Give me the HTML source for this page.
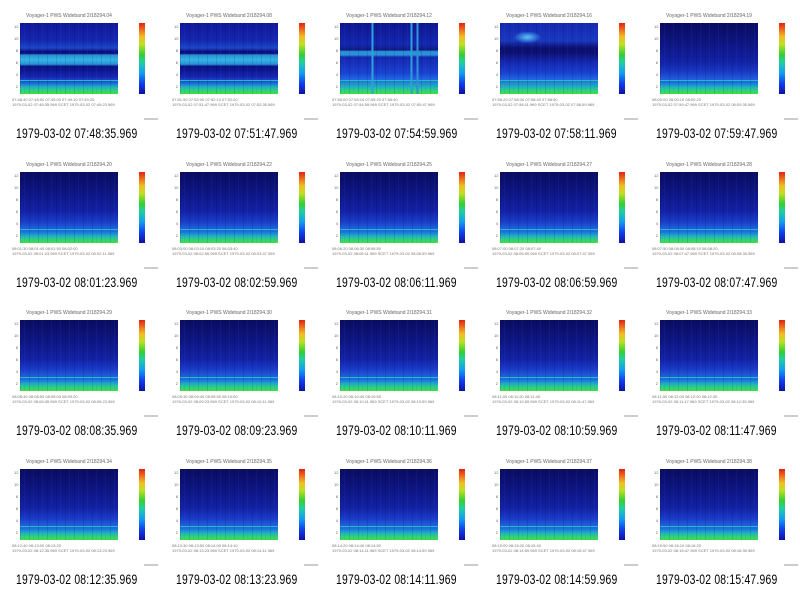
<!DOCTYPE html>
<html><head><meta charset="utf-8">
<style>
*{margin:0;padding:0;box-sizing:border-box}
body{width:800px;height:596px;background:#fff;position:relative;overflow:hidden;font-family:"Liberation Sans",sans-serif}
.c{position:absolute;width:160px;height:148px}
.t{position:absolute;left:20px;top:13px;width:98px;text-align:center;font-size:5px;line-height:6px;color:#666;white-space:nowrap}
.p{position:absolute;left:20px;top:23px;width:98px;height:71px;
background:
repeating-linear-gradient(to right,rgba(0,0,40,.12) 0 1px,transparent 1px 4px,rgba(60,90,230,.1) 4px 5px,transparent 5px 9px),
linear-gradient(to bottom,transparent 0,transparent 80%,#2bb8c8 80%,#2bb8c8 82%,transparent 82%),
linear-gradient(to bottom,#0a0c60 0%,#0e1684 30%,#1222a4 55%,#1a3cc8 70%,#1e5ad8 78%,#1870e0 84%,#20b0c0 90%,#30d080 95%,#40e040 100%)}
.p1{background:
repeating-linear-gradient(to right,rgba(0,0,40,.12) 0 1px,transparent 1px 4px,rgba(60,90,230,.1) 4px 5px,transparent 5px 9px),
linear-gradient(to bottom,transparent 0,transparent 80%,#2bb8c8 80%,#2bb8c8 82%,transparent 82%),
linear-gradient(to bottom,#10189a 0%,#1428b0 25%,#1a48c8 35%,#0c1080 40%,#0c1080 43%,#2a90d8 45%,#30b8e0 52%,#2a90d8 58%,#0c1080 61%,#0e1690 66%,#1428b0 76%,#1a60d8 84%,#20b0c0 90%,#30d080 95%,#40e040 100%)}
.p3{background:
linear-gradient(to right,transparent 32%,#30a0d8 32%,#30a0d8 34%,transparent 34%,transparent 72%,#30a0d8 72%,#30a0d8 74%,transparent 74%,transparent 78%,#3090d8 78%,#3090d8 80%,transparent 80%),
repeating-linear-gradient(to right,rgba(0,0,40,.12) 0 1px,transparent 1px 4px,rgba(60,90,230,.1) 4px 5px,transparent 5px 9px),
linear-gradient(to bottom,transparent 0,transparent 80%,#2bb8c8 80%,#2bb8c8 82%,transparent 82%),
linear-gradient(to bottom,#0e1690 0%,#1428b0 30%,#101a80 38%,#2a90d8 40%,#2a90d8 45%,#1428b0 48%,#1a40d0 70%,#1e60e0 78%,#20b0c0 90%,#30d080 95%,#40e040 100%)}
.p4{background:
radial-gradient(ellipse 14px 6px at 28% 20%,#60c8f0 0%,#3070d8 60%,transparent 100%),
repeating-linear-gradient(to right,rgba(0,0,40,.12) 0 1px,transparent 1px 4px,rgba(60,90,230,.1) 4px 5px,transparent 5px 9px),
linear-gradient(to bottom,transparent 0,transparent 80%,#2bb8c8 80%,#2bb8c8 82%,transparent 82%),
linear-gradient(to bottom,#1428b0 0%,#1a38c0 25%,#0c1070 35%,#0c1070 42%,#1428b0 55%,#1a40d0 70%,#1e60e0 78%,#20b0c0 90%,#30d080 95%,#40e040 100%)}
.b{position:absolute;left:139px;top:23px;width:6px;height:71px;
background:linear-gradient(to top,#1010a0 0%,#1040f0 15%,#10a0f0 30%,#20d0a0 45%,#30d030 55%,#c0e020 70%,#f0c020 80%,#f08020 88%,#e02010 100%)}
.ya{position:absolute;left:14px;top:21px;font-size:4px;line-height:12px;color:#666;text-align:right;width:4px}
.xl{position:absolute;left:12px;top:97px;width:120px;font-size:4px;color:#777;white-space:nowrap;line-height:5px}
.st{position:absolute;left:144px;top:118px;width:14px;height:2px;background:#ccc}
.cap{position:absolute;left:16px;top:125px;font-size:14px;color:#000;white-space:nowrap;transform:scaleX(0.74);transform-origin:left top;letter-spacing:0.3px}
</style></head><body>

<div class="c" style="left:0;top:0"><div class="t">Voyager-1 PWS Wideband 2/18294.04</div><div class="ya">12<br>10<br>8<br>6<br>4<br>2</div><div class="p p1"></div><div class="b"></div><div class="xl">07:48:40 07:48:50 07:49:00 07:49:10 07:49:20<br>1979-03-02 07:48:35.969 SCET 1979-03-02 07:49:23.969</div><div class="st"></div><div class="cap">1979-03-02 07:48:35.969</div></div>
<div class="c" style="left:160px;top:0"><div class="t">Voyager-1 PWS Wideband 2/18294.08</div><div class="ya">12<br>10<br>8<br>6<br>4<br>2</div><div class="p p1"></div><div class="b"></div><div class="xl">07:51:50 07:52:00 07:52:10 07:52:20<br>1979-03-02 07:51:47.969 SCET 1979-03-02 07:52:35.969</div><div class="st"></div><div class="cap">1979-03-02 07:51:47.969</div></div>
<div class="c" style="left:320px;top:0"><div class="t">Voyager-1 PWS Wideband 2/18294.12</div><div class="ya">12<br>10<br>8<br>6<br>4<br>2</div><div class="p p3"></div><div class="b"></div><div class="xl">07:55:00 07:55:10 07:55:20 07:55:40<br>1979-03-02 07:54:59.969 SCET 1979-03-02 07:55:47.969</div><div class="st"></div><div class="cap">1979-03-02 07:54:59.969</div></div>
<div class="c" style="left:480px;top:0"><div class="t">Voyager-1 PWS Wideband 2/18294.16</div><div class="ya">12<br>10<br>8<br>6<br>4<br>2</div><div class="p p4"></div><div class="b"></div><div class="xl">07:58:20 07:58:30 07:58:40 07:58:50<br>1979-03-02 07:58:11.969 SCET 1979-03-02 07:58:59.969</div><div class="st"></div><div class="cap">1979-03-02 07:58:11.969</div></div>
<div class="c" style="left:640px;top:0"><div class="t">Voyager-1 PWS Wideband 2/18294.19</div><div class="ya">12<br>10<br>8<br>6<br>4<br>2</div><div class="p"></div><div class="b"></div><div class="xl">08:00:00 08:00:10 08:00:20<br>1979-03-02 07:59:47.969 SCET 1979-03-02 08:00:35.969</div><div class="st"></div><div class="cap">1979-03-02 07:59:47.969</div></div>

<div class="c" style="left:0;top:148.5px"><div class="t">Voyager-1 PWS Wideband 2/18294.20</div><div class="ya">12<br>10<br>8<br>6<br>4<br>2</div><div class="p"></div><div class="b"></div><div class="xl">08:01:30 08:01:40 08:01:50 08:02:00<br>1979-03-02 08:01:23.969 SCET 1979-03-02 08:02:11.969</div><div class="st"></div><div class="cap">1979-03-02 08:01:23.969</div></div>
<div class="c" style="left:160px;top:148.5px"><div class="t">Voyager-1 PWS Wideband 2/18294.22</div><div class="ya">12<br>10<br>8<br>6<br>4<br>2</div><div class="p"></div><div class="b"></div><div class="xl">08:03:00 08:03:10 08:03:20 08:03:40<br>1979-03-02 08:02:59.969 SCET 1979-03-02 08:03:47.969</div><div class="st"></div><div class="cap">1979-03-02 08:02:59.969</div></div>
<div class="c" style="left:320px;top:148.5px"><div class="t">Voyager-1 PWS Wideband 2/18294.25</div><div class="ya">12<br>10<br>8<br>6<br>4<br>2</div><div class="p"></div><div class="b"></div><div class="xl">08:06:20 08:06:30 08:06:50<br>1979-03-02 08:06:11.969 SCET 1979-03-02 08:06:59.969</div><div class="st"></div><div class="cap">1979-03-02 08:06:11.969</div></div>
<div class="c" style="left:480px;top:148.5px"><div class="t">Voyager-1 PWS Wideband 2/18294.27</div><div class="ya">12<br>10<br>8<br>6<br>4<br>2</div><div class="p"></div><div class="b"></div><div class="xl">08:07:00 08:07:20 08:07:40<br>1979-03-02 08:06:59.969 SCET 1979-03-02 08:07:47.969</div><div class="st"></div><div class="cap">1979-03-02 08:06:59.969</div></div>
<div class="c" style="left:640px;top:148.5px"><div class="t">Voyager-1 PWS Wideband 2/18294.28</div><div class="ya">12<br>10<br>8<br>6<br>4<br>2</div><div class="p"></div><div class="b"></div><div class="xl">08:07:50 08:08:00 08:08:10 08:08:20<br>1979-03-02 08:07:47.969 SCET 1979-03-02 08:08:35.969</div><div class="st"></div><div class="cap">1979-03-02 08:07:47.969</div></div>

<div class="c" style="left:0;top:297px"><div class="t">Voyager-1 PWS Wideband 2/18294.29</div><div class="ya">12<br>10<br>8<br>6<br>4<br>2</div><div class="p"></div><div class="b"></div><div class="xl">08:08:40 08:08:50 08:09:00 08:09:20<br>1979-03-02 08:08:35.969 SCET 1979-03-02 08:09:23.969</div><div class="st"></div><div class="cap">1979-03-02 08:08:35.969</div></div>
<div class="c" style="left:160px;top:297px"><div class="t">Voyager-1 PWS Wideband 2/18294.30</div><div class="ya">12<br>10<br>8<br>6<br>4<br>2</div><div class="p"></div><div class="b"></div><div class="xl">08:09:30 08:09:40 08:09:50 08:10:00<br>1979-03-02 08:09:23.969 SCET 1979-03-02 08:10:11.969</div><div class="st"></div><div class="cap">1979-03-02 08:09:23.969</div></div>
<div class="c" style="left:320px;top:297px"><div class="t">Voyager-1 PWS Wideband 2/18294.31</div><div class="ya">12<br>10<br>8<br>6<br>4<br>2</div><div class="p"></div><div class="b"></div><div class="xl">08:10:20 08:10:40 08:10:50<br>1979-03-02 08:10:11.969 SCET 1979-03-02 08:10:59.969</div><div class="st"></div><div class="cap">1979-03-02 08:10:11.969</div></div>
<div class="c" style="left:480px;top:297px"><div class="t">Voyager-1 PWS Wideband 2/18294.32</div><div class="ya">12<br>10<br>8<br>6<br>4<br>2</div><div class="p"></div><div class="b"></div><div class="xl">08:11:00 08:11:20 08:11:40<br>1979-03-02 08:10:59.969 SCET 1979-03-02 08:11:47.969</div><div class="st"></div><div class="cap">1979-03-02 08:10:59.969</div></div>
<div class="c" style="left:640px;top:297px"><div class="t">Voyager-1 PWS Wideband 2/18294.33</div><div class="ya">12<br>10<br>8<br>6<br>4<br>2</div><div class="p"></div><div class="b"></div><div class="xl">08:11:50 08:12:00 08:12:20 08:12:30<br>1979-03-02 08:11:47.969 SCET 1979-03-02 08:12:35.969</div><div class="st"></div><div class="cap">1979-03-02 08:11:47.969</div></div>

<div class="c" style="left:0;top:445.5px"><div class="t">Voyager-1 PWS Wideband 2/18294.34</div><div class="ya">12<br>10<br>8<br>6<br>4<br>2</div><div class="p"></div><div class="b"></div><div class="xl">08:12:40 08:13:00 08:13:20<br>1979-03-02 08:12:35.969 SCET 1979-03-02 08:13:23.969</div><div class="st"></div><div class="cap">1979-03-02 08:12:35.969</div></div>
<div class="c" style="left:160px;top:445.5px"><div class="t">Voyager-1 PWS Wideband 2/18294.35</div><div class="ya">12<br>10<br>8<br>6<br>4<br>2</div><div class="p"></div><div class="b"></div><div class="xl">08:13:30 08:13:50 08:14:00 08:14:10<br>1979-03-02 08:13:23.969 SCET 1979-03-02 08:14:11.969</div><div class="st"></div><div class="cap">1979-03-02 08:13:23.969</div></div>
<div class="c" style="left:320px;top:445.5px"><div class="t">Voyager-1 PWS Wideband 2/18294.36</div><div class="ya">12<br>10<br>8<br>6<br>4<br>2</div><div class="p"></div><div class="b"></div><div class="xl">08:14:20 08:14:40 08:14:50<br>1979-03-02 08:14:11.969 SCET 1979-03-02 08:14:59.969</div><div class="st"></div><div class="cap">1979-03-02 08:14:11.969</div></div>
<div class="c" style="left:480px;top:445.5px"><div class="t">Voyager-1 PWS Wideband 2/18294.37</div><div class="ya">12<br>10<br>8<br>6<br>4<br>2</div><div class="p"></div><div class="b"></div><div class="xl">08:15:00 08:15:20 08:15:40<br>1979-03-02 08:14:59.969 SCET 1979-03-02 08:15:47.969</div><div class="st"></div><div class="cap">1979-03-02 08:14:59.969</div></div>
<div class="c" style="left:640px;top:445.5px"><div class="t">Voyager-1 PWS Wideband 2/18294.38</div><div class="ya">12<br>10<br>8<br>6<br>4<br>2</div><div class="p"></div><div class="b"></div><div class="xl">08:15:50 08:16:10 08:16:20<br>1979-03-02 08:15:47.969 SCET 1979-03-02 08:16:35.969</div><div class="st"></div><div class="cap">1979-03-02 08:15:47.969</div></div>

</body></html>
